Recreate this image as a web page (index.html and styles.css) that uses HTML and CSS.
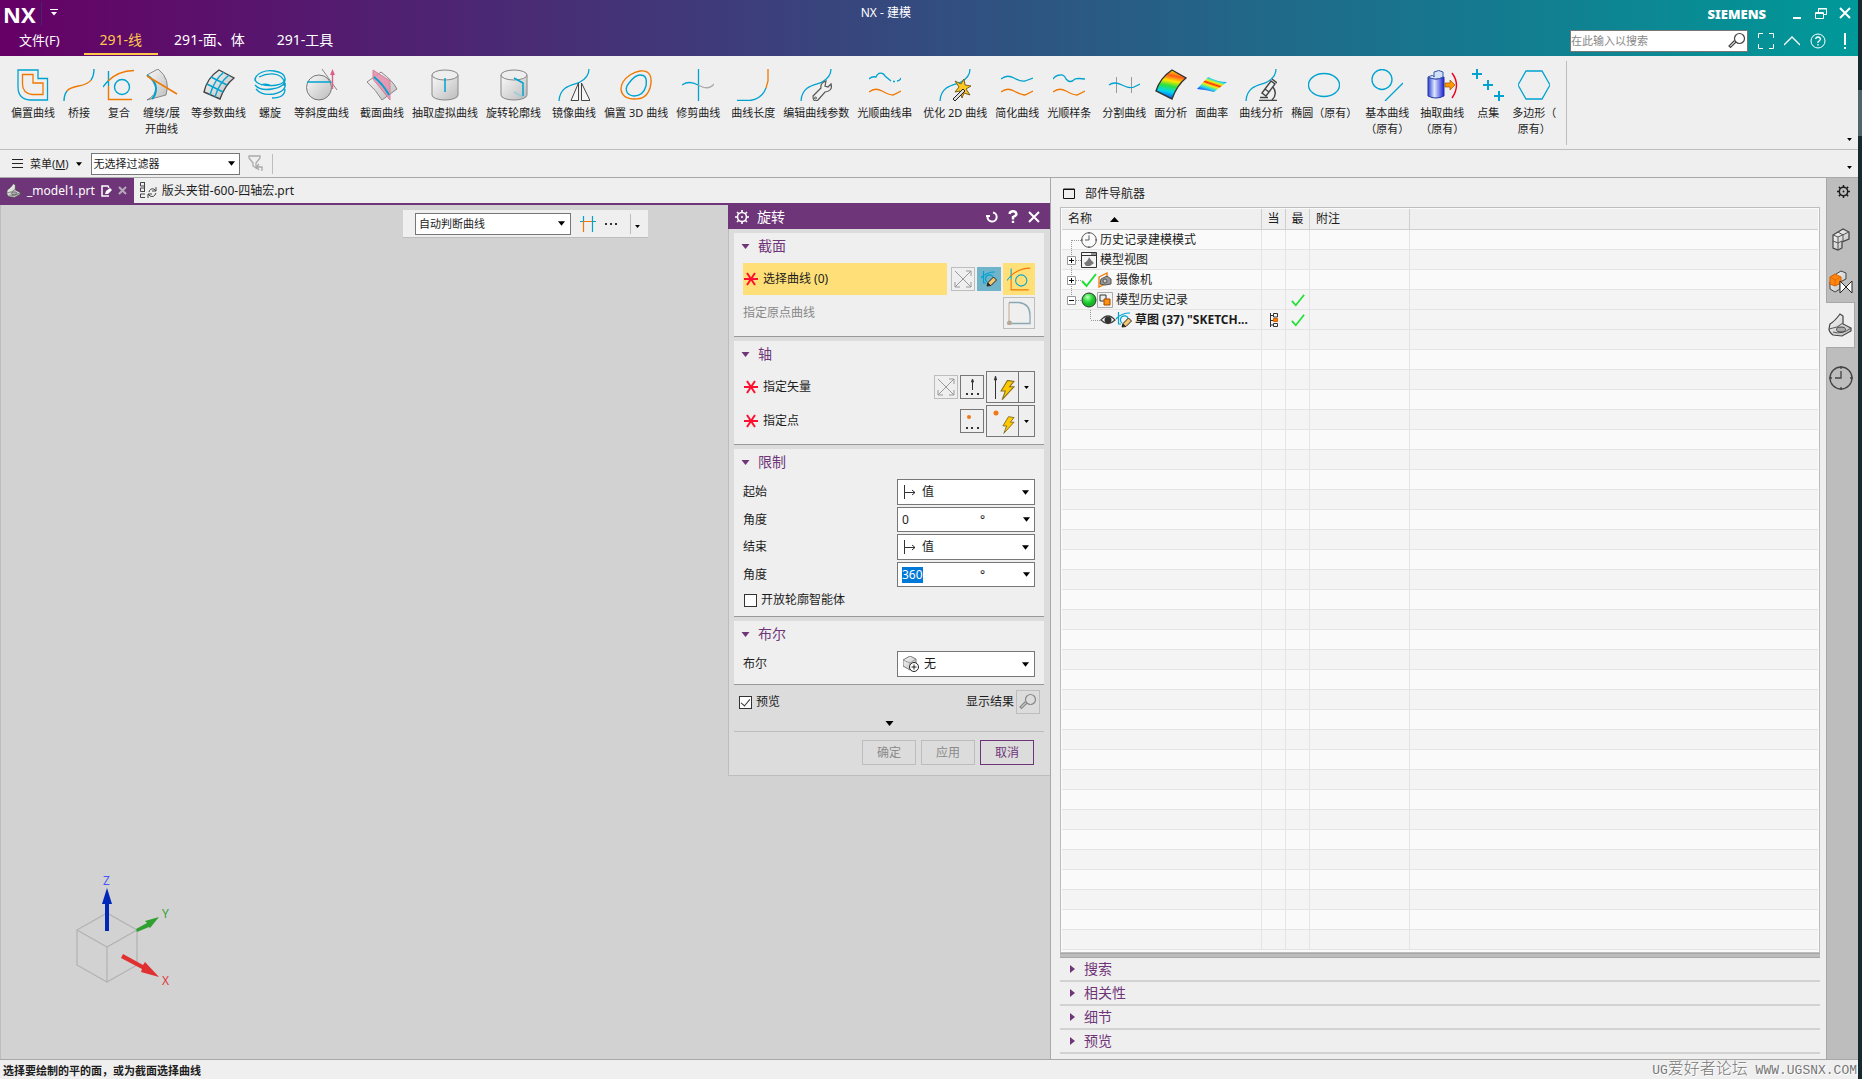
FILE: index.html
```html
<!DOCTYPE html>
<html lang="zh-CN">
<head>
<meta charset="utf-8">
<title>NX - 建模</title>
<link rel="stylesheet" href="styles.css">
</head>
<body>
<svg class="defs" aria-hidden="true">
  <defs>
    <linearGradient id="metal" x1="0" y1="0" x2="1" y2="1"><stop offset="0" stop-color="#fafafa"/><stop offset="1" stop-color="#bcbcbc"/></linearGradient>
    <linearGradient id="rainbow" x1="0.6" y1="0" x2="0.4" y2="1"><stop offset="0.05" stop-color="#ffc400"/><stop offset="0.2" stop-color="#ff5a1e"/><stop offset="0.38" stop-color="#ffe600"/><stop offset="0.55" stop-color="#2fe03c"/><stop offset="0.75" stop-color="#00d8f0"/><stop offset="1" stop-color="#1040f0"/></linearGradient>
    <linearGradient id="bands" gradientUnits="userSpaceOnUse" x1="18" y1="8" x2="13" y2="23"><stop offset="0" stop-color="#1d5cff"/><stop offset="0.18" stop-color="#27e0e0"/><stop offset="0.33" stop-color="#f5f000"/><stop offset="0.46" stop-color="#ff2a1a"/><stop offset="0.58" stop-color="#f5f000"/><stop offset="0.78" stop-color="#27e0e0"/><stop offset="1" stop-color="#1d5cff"/></linearGradient>
    <linearGradient id="bluecyl"><stop offset="0" stop-color="#2a3fd0"/><stop offset="0.4" stop-color="#dfe6ff"/><stop offset="1" stop-color="#1a1fd0"/></linearGradient>
    <radialGradient id="ball" cx="0.4" cy="0.3"><stop offset="0" stop-color="#c8ffc8"/><stop offset="0.6" stop-color="#30e040"/><stop offset="1" stop-color="#18b828"/></radialGradient>
    <symbol id="tri" viewBox="0 0 8 5"><path d="M0 0H8L4 5Z"/></symbol>
    <symbol id="star" viewBox="0 0 14 14"><path d="M0 7H14M3 1L11 13M11 1L3 13" fill="none" stroke="#ff1030" stroke-width="2"/></symbol>
    <symbol id="composite" viewBox="0 0 32 32"><g fill="none" stroke-width="1.4"><path d="M5.500 2V17M0 18Q3 14 5 12" stroke="#00a3d0"/><path d="M5 12Q15 2 31 1.500M5.500 17V30.500H29" stroke="#f07800"/><circle cx="19" cy="18" r="7.500" stroke="#00a3d0"/></g></symbol>
    <symbol id="pencilsketch" viewBox="0 0 16 16"><path d="M2.500 0V12H5M0 7Q5 1 14 1M6 11A4 4 0 1 1 12 6" fill="none" stroke="#00a3d0" stroke-width="1.200"/><path d="M6 15L7 11.500 12.500 6 15.500 9 10 14.500Z" fill="#f2c870" stroke="#222" stroke-width="1"/><path d="M6 15L7 11.500 9.500 14Z" fill="#222"/></symbol>
    <symbol id="cross" viewBox="0 0 24 24"><path d="M4 4L20 20M20 4L4 20M20 9V4H15M9 20H4V15M15 20H20V15" fill="none" stroke="#999"/></symbol>
    <symbol id="bolt" viewBox="0 0 14 18"><path d="M7 0L13 1 9 6H13L2 18 5 10H1Z" fill="#ffc800" stroke="#857020"/></symbol>
    <symbol id="mag" viewBox="0 0 18 18"><circle cx="11.500" cy="6.500" r="5" fill="none" stroke="currentColor" stroke-width="1.200"/><path d="M8 10L2.500 15.500 1 14 6.500 8.500" fill="none" stroke="currentColor" stroke-width="1.200"/></symbol>
    <symbol id="gear" viewBox="0 0 14 14"><circle cx="7" cy="7" r="4.500" fill="none" stroke="currentColor" stroke-width="1.600"/><circle cx="7" cy="7" r="1" fill="currentColor"/><path d="M7 0V2.500M7 11.500V14M0 7H2.500M11.500 7H14M2 2L4 4M10 10L12 12M12 2L10 4M4 10L2 12" stroke="currentColor" stroke-width="1.600"/></symbol>
    <symbol id="curve" viewBox="0 0 32 32"><path d="M1 32C2 15 18 16 22 13Q31 8 31 0" fill="none" stroke="#00a3d0" stroke-width="1.300"/></symbol>
    <symbol id="value" viewBox="0 0 14 14"><path d="M1.500 0V14M2 7.500H12M9 5L12 7.500 9 10" fill="none" stroke="#333"/></symbol>
    <symbol id="tick" viewBox="0 0 16 16"><path d="M1 9L5.500 14 15 2" fill="none" stroke="#20e030" stroke-width="2"/></symbol>
    <symbol id="part" viewBox="0 0 24 24"><path d="M1 16L2 11Q7 8 12 1L15 3V11L23 15V18L14 23 5 22Q1 19 1 16Z" fill="url(#metal)" stroke="#444" stroke-width="1.200"/><path d="M1 16Q10 15 15 10M5 19Q14 22 23 15" fill="none" stroke="#555"/><ellipse cx="13" cy="16.500" rx="4.500" ry="2.500" fill="#aaa" stroke="#444"/></symbol>
    <symbol id="clock" viewBox="0 0 24 24"><circle cx="12" cy="12" r="11" fill="none" stroke="#444" stroke-width="1.300"/><path d="M12 5V12H6M12 0V3M12 21V24M0 12H3M21 12H24" fill="none" stroke="#444" stroke-width="1.300"/></symbol>
  </defs>
</svg>
<div class="app">
  <header class="titlebar">
    <div class="title-row">
      <span class="logo">NX</span>
      <button class="qat" aria-label="快速访问"><svg width="8" height="7" fill="#fff"><path d="M0 0H8V1H0ZM1 3H7L4 6.500Z"/></svg></button>
      <h1 class="title">NX - 建模</h1>
      <span class="brand">SIEMENS</span>
      <div class="window-buttons">
        <button aria-label="最小化"><svg width="12" height="12"><path d="M2 11H10" stroke="#fff" stroke-width="2"/></svg></button>
        <button aria-label="还原"><svg width="12" height="12" fill="none" stroke="#fff"><path d="M3.500 5V1.500H11.500V7.500H8M3 2H12M.5 5.500H8.500V11.500H.5ZM1 6.500H8"/></svg></button>
        <button aria-label="关闭"><svg width="12" height="12"><path d="M1 1L11 11M11 1L1 11" stroke="#fff" stroke-width="2"/></svg></button>
      </div>
    </div>
    <div class="menu-row">
      <nav class="tabs">
        <a href="#file" class="file">文件(F)</a>
        <a href="#line" class="active">291-线</a>
        <a href="#face">291-面、体</a>
        <a href="#tool">291-工具</a>
      </nav>
      <div class="search"><input type="text" aria-label="搜索" placeholder="在此输入以搜索"><svg width="18" height="18"><use href="#mag"/></svg></div>
      <div class="help-buttons">
        <button aria-label="全屏"><svg width="16" height="16" fill="none" stroke="#fff"><path d="M.5 5V.5H5M11 .5H15.500V5M15.500 11V15.500H11M5 15.500H.5V11"/></svg></button>
        <button aria-label="折叠"><svg width="16" height="16" fill="none" stroke="#fff" stroke-width="1.300"><path d="M0 12L8 4 16 12"/></svg></button>
        <button aria-label="帮助"><svg width="16" height="16" fill="none" stroke="#fff"><circle cx="8" cy="8" r="7"/><path d="M5.500 6Q6 4 8 4T10.500 6Q10.500 7 8 9V10M8 11V12.500" stroke-width="1.300"/></svg></button>
        <button aria-label="提示" class="alert"><svg width="4" height="16"><path d="M2 0V12M2 14V16" stroke="#fff" stroke-width="2"/></svg></button>
      </div>
    </div>
  </header>

  <section class="ribbon">
    <div class="group">
      <button><svg class="ic" viewBox="0 0 32 32" fill="none" stroke-width="1.300"><path d="M1 1H21V9.500H30.500V31H13Q1 30 1 18Z" stroke="#00a3d0"/><path d="M5.500 5.500H16V14H26V25.500H15Q5.500 24 5.500 15Z" stroke="#f07800"/></svg>偏置曲线</button>
      <button><svg class="ic" viewBox="0 0 32 32" fill="none" stroke-width="1.400"><path d="M1 32Q1 26 4 22M28 11Q31 7 31 0" stroke="#00a3d0"/><path d="M4 22C9 15 23 19 28 11" stroke="#f07800"/></svg>桥接</button>
      <button><svg class="ic"><use href="#composite"/></svg>复合</button>
      <button><svg class="ic" viewBox="0 0 32 32"><path d="M1 6L12 0Q25 10 20 26L1 31Q10 26 10 19 8 12 1 6Z" fill="url(#metal)" stroke="#888"/><path d="M1 6Q10 12 10 19T6 30" fill="none" stroke="#00a3d0" stroke-width="2"/><path d="M1 7L31 25" stroke="#f07800" stroke-width="1.500"/></svg>缠绕/展<br>开曲线</button>
    </div>
    <div class="group">
      <button><svg class="ic" viewBox="0 0 32 32" fill="none"><path d="M16 1L31 9Q22 16 17 30L1 23Q4 9 16 1Z" fill="url(#metal)" stroke="#444" stroke-width="1.400"/><path d="M21 3Q11 11 7 26M26 6Q16 14 12 28M8 8L24 16M4 15L20 23" stroke="#00a3d0" stroke-width="1.400"/></svg>等参数曲线</button>
      <button><svg class="ic" viewBox="0 0 32 32" fill="none" stroke="#00a3d0" stroke-width="1.300"><path d="M1 12C1 3 13 1 20 2 34 4 34 14 23 16 12 18 0 15 1 9M1 16Q6 22 18 20 32 18 31 9M2 20Q8 27 20 25 33 22 31 14M31 20Q31 29 18 29M5 8Q15 3 24 6 32 10 30 17M7 16Q12 14 18 17"/></svg>螺旋</button>
      <button><svg class="ic" viewBox="0 0 32 32"><circle cx="13" cy="18.500" r="12.500" fill="url(#metal)" stroke="#777"/><path d="M16 0L31 21" stroke="#888"/><path d="M1 13H25" stroke="#00a3d0" stroke-width="1.500"/><path d="M26.500 20V5" stroke="#dc6088" stroke-width="1.400"/><path d="M24 6L26.500 0 29 6Z" fill="#dc6088"/></svg>等斜度曲线</button>
    </div>
    <div class="group">
      <button><svg class="ic" viewBox="0 0 32 32"><path d="M1 13L15 3Q27 12 31 20L16 31Q10 21 1 13Z" fill="url(#metal)" stroke="#888"/><path d="M7 1L24 12V31L7 10Z" fill="#e68aa8" fill-opacity=".8" stroke="#d8809c"/><path d="M8 8Q17 15 23 26" fill="none" stroke="#00a3d0" stroke-width="2"/></svg>截面曲线</button>
      <button><svg class="ic" viewBox="0 0 32 32"><path d="M3 6V26A13 5 0 0 0 29 26V6" fill="url(#metal)" stroke="#888"/><ellipse cx="16" cy="6" rx="13" ry="5" fill="#eee" stroke="#888"/><path d="M16 9V23" stroke="#00a3d0" stroke-width="1.500"/></svg>抽取虚拟曲线</button>
      <button><svg class="ic" viewBox="0 0 32 32"><path d="M3 6V26A13 5 0 0 0 29 26V6" fill="url(#metal)" stroke="#888"/><ellipse cx="16" cy="6" rx="13" ry="5" fill="#eee" stroke="#888"/><path d="M16 9L25 14V27" fill="none" stroke="#00a3d0" stroke-width="1.500"/><path d="M16 23L25 28" stroke="#9accda" stroke-width="1.500"/></svg>旋转轮廓线</button>
    </div>
    <div class="group">
      <button><svg class="ic" viewBox="0 0 32 32" fill="none"><use href="#curve"/><path d="M20.500 14V31.500H13ZM23.500 14V31.500H32Z" fill="#f6f6f6" stroke="#444"/></svg>镜像曲线</button>
      <button><svg class="ic" viewBox="0 0 32 32" fill="none"><path d="M20 2C30 1 33 8 30 19 27 28 22 30 14 30 3 30 -2 22 3 13 6 8 13 3 20 2Z" stroke="#f07800" stroke-width="1.400"/><path d="M20 6C26 6 27 10 26 17 24 24 20 27 14 27 6 26 4 20 9 14 12 10 16 6 20 6Z" stroke="#00a3d0" stroke-width="1.400"/></svg>偏置 3D 曲线</button>
      <button><svg class="ic" viewBox="0 0 32 32" fill="none" stroke-width="1.300"><path d="M16.500 0V32M0 16Q7 11 16 16" stroke="#00a3d0"/><path d="M16 16Q27 22 32 15" stroke="#aaa"/></svg>修剪曲线</button>
    </div>
    <div class="group">
      <button><svg class="ic" viewBox="0 0 32 32" fill="none" stroke-width="1.300"><path d="M0 31.500H13Q25 30 29 19" stroke="#00a3d0"/><path d="M31 0V12L29 19" stroke="#f07800"/></svg>曲线长度</button>
      <button><svg class="ic" viewBox="0 0 32 32" fill="none"><use href="#curve"/><path d="M13 27L21 19Q20 14 26 12L25 17 28 18 31 15Q33 22 25 23L18 31Q13 34 13 27Z" fill="#f0f0f0" stroke="#555" stroke-width="1.200"/><circle cx="15.500" cy="29" r="1" stroke="#555"/></svg>编辑曲线参数</button>
      <button><svg class="ic" viewBox="0 0 32 32" fill="none" stroke-width="1.300"><path d="M0 10Q3 7 7 8C9 3 14 3 16 7T22 12M24 12.500H26M28 12Q31 12 32 9" stroke="#00a3d0"/><path d="M0 23Q6 18 13 22T24 26L32 22" stroke="#f07800"/></svg>光顺曲线串</button>
    </div>
    <div class="group">
      <button><svg class="ic" viewBox="0 0 32 32"><use href="#curve"/><path d="M16 12L22 15 25 10 26 16 32 17 27 20 31 26 25 24 23 29 21 22 16 23 20 18Z" fill="#ffc820" stroke="#776018"/><path d="M14 30L24 20 26 22 16 32Z" fill="#ddd" stroke="#222"/></svg>优化 2D 曲线</button>
      <button><svg class="ic" viewBox="0 0 32 32" fill="none" stroke-width="1.300"><path d="M0 10Q6 5 13 9T24 12L32 9" stroke="#00a3d0"/><path d="M0 23Q6 18 13 22T24 26L32 22" stroke="#f07800"/></svg>简化曲线</button>
      <button><svg class="ic" viewBox="0 0 32 32" fill="none" stroke-width="1.300"><path d="M0 10Q3 6 7 6 11 5 13 10 17 15 22 10 25 9 32 10" stroke="#00a3d0"/><path d="M0 23Q6 18 13 22T24 26L32 22" stroke="#f07800"/></svg>光顺样条</button>
    </div>
    <div class="group">
      <button><svg class="ic" viewBox="0 0 32 32" fill="none"><path d="M8.500 8V24M23.500 8V24" stroke="#999"/><path d="M1 16Q6 12 14 16T26 18L32 15" stroke="#00a3d0" stroke-width="1.300"/></svg>分割曲线</button>
      <button class="tight"><svg class="ic" viewBox="0 0 32 32"><path d="M17 1L31 9Q22 16 17 30L1 22Q5 9 17 1Z" fill="url(#rainbow)" stroke="#333" stroke-width="1.400"/></svg>面分析</button>
      <button class="tight"><svg class="ic" viewBox="0 0 32 32"><path d="M12 8Q22 13 31 13L18 23Q11 21 1 20Z" fill="url(#bands)"/></svg>面曲率</button>
    </div>
    <div class="group">
      <button><svg class="ic" viewBox="0 0 32 32" fill="none"><use href="#curve"/><path d="M14 31.500H32M15 28.500H23M17 24L26 12 30 15 21 27ZM28 18Q33 25 27 31M20 20L24 23M27 10L32 14" stroke="#444" stroke-width="1.400"/></svg>曲线分析</button>
      <button><svg class="ic" viewBox="0 0 32 32" fill="none" stroke="#00a3d0" stroke-width="1.300"><ellipse cx="16" cy="16" rx="15.500" ry="11.500"/></svg>椭圆（原有）</button>
    </div>
    <div class="group flush">
      <button><svg class="ic" viewBox="0 0 32 32" fill="none" stroke="#00a3d0" stroke-width="1.300"><circle cx="11" cy="10.500" r="10"/><path d="M14 32L32 14"/></svg>基本曲线<br>（原有）</button>
    </div>
    <div class="group">
      <button><svg class="ic" viewBox="0 0 32 32"><path d="M2 8V27Q10 31 18 27V8Q10 12 2 8Z" fill="url(#bluecyl)" stroke="#2438a0"/><path d="M2 8Q8 5 8 8V3Q13 0 17 3V8Q10 12 2 8Z" fill="#cfe0f8" stroke="#3858a8"/><path d="M19 14H24V11L29 16 24 21V18H19Z" fill="#ff9800" stroke="#a05000" stroke-width=".7"/><path d="M26 4Q35 16 26 29" fill="none" stroke="#f00020" stroke-width="1.400"/></svg>抽取曲线<br>（原有）</button>
      <button><svg class="ic" viewBox="0 0 32 32" stroke="#00a3d0" stroke-width="2"><path d="M0 5H10M5 0V10M11 16H21M16 11V21M22 27H32M27 22V32"/></svg>点集</button>
      <button><svg class="ic" viewBox="0 0 32 32" fill="none" stroke="#00a3d0" stroke-width="1.300"><path d="M8 2H24L32 16 24 30H8L0 16Z"/></svg>多边形（<br>原有）</button>
    </div>
    <button class="more" aria-label="更多"><svg width="5" height="3"><use href="#tri"/></svg></button>
  </section>

  <div class="filterbar">
    <button class="menu-btn"><svg width="11" height="11" stroke="#222"><path d="M0 1.500H11M0 5.500H11M0 9.500H11"/></svg><span>菜单(<u>M</u>)</span><svg width="6" height="4"><use href="#tri"/></svg></button>
    <div class="combo filter"><select aria-label="选择过滤器"><option>无选择过滤器</option></select><svg class="arrow"><use href="#tri"/></svg></div>
    <svg width="17" height="17" fill="none" stroke="#aaa" stroke-width="1.300"><path d="M1 1H12V3L8 8V13L5 11V8L1 3ZM9 12H14V16M11 9L8.500 12 11 15"/></svg>
    <span class="vsep"></span>
    <button class="more" aria-label="更多"><svg width="5" height="3"><use href="#tri"/></svg></button>
  </div>

  <main class="main">
    <section class="workspace">
      <div class="doc-tabs">
        <button class="doc-tab current"><svg width="15" height="15"><use href="#part"/></svg><span>_model1.prt</span><svg width="11" height="12"><path d="M8 11H1V1H7L8 3" fill="none" stroke="#fff" stroke-width="1.500"/><path d="M4 9L5 6L9 3L11 5L7 9Z" fill="#fff"/></svg><svg width="9" height="9"><path d="M1 1L8 8M8 1L1 8" stroke="#b6aab9" stroke-width="2"/></svg></button>
        <button class="doc-tab"><svg width="17" height="17" fill="none" stroke="#444"><path d="M5 .5H.5V4H5M5 6H.5V9.500H5M5 12H.5V15.500H5M4.500 1V9M9 10Q10 6 14 7L16 9M16 5V9H12M16 11Q14 16 10 14L8 12M8 16V12H12"/></svg><span>版头夹钳-600-四轴宏.prt</span></button>
      </div>
      <div class="canvas">
        <div class="select-bar">
          <div class="combo rule"><select aria-label="曲线规则"><option>自动判断曲线</option></select><svg class="arrow"><use href="#tri"/></svg></div>
          <button aria-label="在相交处停止"><svg width="16" height="16" stroke-width="1.200" fill="none"><path d="M3.500 0V5M12.500 0V16M0 5.500H4M12 5.500H16" stroke="#00a3d0"/><path d="M3.500 5V16M4 5.500H12" stroke="#f07800"/></svg></button>
          <button aria-label="更多选项"><svg width="12" height="2"><path d="M0 0H2V2H0ZM5 0H7V2H5ZM10 0H12V2H10Z" fill="#333"/></svg></button>
          <span class="vsep"></span>
          <button aria-label="更多" class="low"><svg width="5" height="3"><use href="#tri"/></svg></button>
        </div>
        <svg class="triad" width="110" height="120" font-size="12">
          <g fill="none" stroke="#b2b2b2" stroke-width="1.200"><path d="M7 59L37 42 67 59 37 76ZM7 59V94L37 111 67 94V59M37 76V111"/></g>
          <path d="M35 60V33H32L37 17 42 33H39V60Z" fill="#0028b8"/>
          <path d="M66 58L77 52 75 50 89 46 80 57 79 56 67 61Z" fill="#30a030"/>
          <path d="M53 83L73 94 75 91 89 106 71 101 72 98 51 87Z" fill="#e03030"/>
          <text x="33" y="14" fill="#4858f8">Z</text><text x="92" y="47" fill="#38a038">Y</text><text x="92" y="114" fill="#e03838">X</text>
        </svg>
      </div>

      <form class="dialog">
        <header><svg width="14" height="14"><use href="#gear"/></svg><h2>旋转</h2>
          <button type="button" aria-label="重置"><svg width="12" height="12" fill="none" stroke="#fff" stroke-width="2"><path d="M7 1.500A4.600 4.600 0 1 1 1.500 6M0 5H4"/></svg></button>
          <button type="button" aria-label="帮助"><svg width="10" height="13" fill="none" stroke="#fff" stroke-width="2.400"><path d="M1.500 4Q2 1.300 5 1.300T8.500 4Q8.500 5.500 5 7V9.500M5 10.800V13"/></svg></button>
          <button type="button" aria-label="关闭"><svg width="12" height="12"><path d="M1 1L11 11M11 1L1 11" stroke="#fff" stroke-width="2"/></svg></button>
        </header>
        <section class="block">
          <h3><svg><use href="#tri"/></svg>截面</h3>
          <div class="row tall">
            <div class="pick"><svg width="14" height="14"><use href="#star"/></svg>选择曲线 (0)</div>
            <button type="button" class="tool off" aria-label="反向"><svg width="24" height="24"><use href="#cross"/></svg></button>
            <button type="button" class="tool blue" aria-label="绘制截面"><svg width="16" height="16"><use href="#pencilsketch"/></svg></button>
            <button type="button" class="tool big yellow" aria-label="曲线"><svg width="24" height="24"><use href="#composite"/></svg></button>
          </div>
          <div class="row tall"><span class="label muted">指定原点曲线</span>
            <button type="button" class="tool big off" aria-label="原点曲线"><svg width="24" height="24" fill="none"><path d="M2 22V1.500" stroke="#c8a890"/><path d="M2 1.500H12Q23 3 23 14V22.500H5" stroke="#88a8b4" stroke-width="1.300"/><circle cx="2.500" cy="22" r="2.500" fill="#b8a898"/></svg></button></div>
        </section>
        <section class="block">
          <h3><svg><use href="#tri"/></svg>轴</h3>
          <div class="row tall"><span class="label need"><svg width="14" height="14"><use href="#star"/></svg>指定矢量</span>
            <button type="button" class="tool off" aria-label="反向"><svg width="24" height="24"><use href="#cross"/></svg></button>
            <button type="button" class="tool" aria-label="矢量对话框"><svg width="16" height="18"><path d="M8.500 12V4M7.500 4L8.500 1 9.500 4Z" fill="#333" stroke="#333"/><path d="M2 16H4M7 16H9M13 16H15" stroke="#333" stroke-width="2"/></svg></button>
            <div class="split"><button type="button" aria-label="自动判断矢量"><svg width="24" height="26"><path d="M4.500 25V4M3.500 6L4.500 2 5.500 6Z" stroke="#333" fill="#333"/><use href="#bolt" x="9" y="6" width="15" height="20"/></svg></button><button type="button" aria-label="矢量类型"><svg width="5" height="3"><use href="#tri"/></svg></button></div>
          </div>
          <div class="row tall"><span class="label need"><svg width="14" height="14"><use href="#star"/></svg>指定点</span>
            <button type="button" class="tool" aria-label="点对话框"><svg width="16" height="18"><circle cx="5" cy="5" r="2" fill="#f07818"/><path d="M2 16H4M7 16H9M13 16H15" stroke="#333" stroke-width="2"/></svg></button>
            <div class="split"><button type="button" aria-label="自动判断点"><svg width="24" height="26"><circle cx="5" cy="5" r="2.500" fill="#f07818"/><use href="#bolt" x="11" y="8" width="13" height="18"/></svg></button><button type="button" aria-label="点类型"><svg width="5" height="3"><use href="#tri"/></svg></button></div>
          </div>
        </section>
        <section class="block">
          <h3><svg><use href="#tri"/></svg>限制</h3>
          <div class="row"><label class="label" for="start">起始</label><div class="combo"><svg width="14" height="14"><use href="#value"/></svg><select id="start"><option>值</option></select><svg class="arrow"><use href="#tri"/></svg></div></div>
          <div class="row"><label class="label" for="a1">角度</label><div class="combo angle"><input id="a1" type="text" value="0"><span>°</span><svg class="arrow"><use href="#tri"/></svg></div></div>
          <div class="row"><label class="label" for="end">结束</label><div class="combo"><svg width="14" height="14"><use href="#value"/></svg><select id="end"><option>值</option></select><svg class="arrow"><use href="#tri"/></svg></div></div>
          <div class="row"><label class="label" for="a2">角度</label><div class="combo angle"><input id="a2" type="text" value="360"><span>°</span><svg class="arrow"><use href="#tri"/></svg></div></div>
          <label class="check"><input type="checkbox">开放轮廓智能体</label>
        </section>
        <section class="block">
          <h3><svg><use href="#tri"/></svg>布尔</h3>
          <div class="row"><label class="label" for="bool">布尔</label><div class="combo"><svg width="16" height="16"><path d="M0 4L7 0 13 3V10L7 14 0 10Z" fill="url(#metal)" stroke="#777"/><path d="M0 4L7 7 13 3M7 7V14" fill="none" stroke="#999"/><circle cx="11" cy="11" r="4.500" fill="#fff" stroke="#222"/><path d="M11 8.500V13.500M8.500 11H13.500" stroke="#222"/></svg><select id="bool"><option>无</option></select><svg class="arrow"><use href="#tri"/></svg></div></div>
        </section>
        <div class="preview">
          <label class="check"><input type="checkbox" checked>预览</label>
          <span class="result">显示结果</span>
          <button type="button" class="tool off" aria-label="显示结果"><svg width="18" height="18"><use href="#mag"/></svg></button>
        </div>
        <button type="button" class="expand" aria-label="展开"><svg width="9" height="5"><use href="#tri"/></svg></button>
        <footer><button type="button" disabled>确定</button><button type="button" disabled>应用</button><button type="button" class="cancel">取消</button></footer>
      </form>
    </section>

    <aside class="navigator">
      <h2><svg width="12" height="12"><path d="M.5 1H11.500V10.500H.5ZM0 1.500H12" fill="none" stroke="#111"/></svg>部件导航器</h2>
      <div class="tree">
        <table>
          <colgroup><col class="c-name"><col class="c-mini"><col class="c-mini"><col class="c-note"><col></colgroup>
          <thead><tr><th>名称<svg width="9" height="5"><path d="M0 5L4.500 0 9 5Z"/></svg></th><th class="mid">当</th><th class="mid">最</th><th>附注</th><th></th></tr></thead>
          <tbody id="tree-body">
            <tr><td><div class="node"><svg width="19" height="20" class="dots"><path d="M9.500 10V20M10 10.500H19"/></svg><svg width="16" height="16"><use href="#clock"/></svg><span>历史记录建模模式</span></div></td><td></td><td></td><td></td><td></td></tr>
            <tr><td><div class="node"><svg width="19" height="20" class="dots"><path d="M9.500 0V20M10 10.500H19"/><path class="box" d="M5.500 6.500H13.500V14.500H5.500Z"/><path class="sign" d="M7 10.500H12M9.500 8V13"/></svg><svg width="16" height="16"><path d="M.5 .5H15.500V15.500H.5ZM0 3.500H16M10 2H15" fill="none" stroke="#333"/><path d="M3 11Q7 9 8 5L10 8 13 11 9 14H5Z" fill="#777"/></svg><span>模型视图</span></div></td><td></td><td></td><td></td><td></td></tr>
            <tr><td><div class="node"><svg width="19" height="20" class="dots"><path d="M9.500 0V20M10 10.500H19"/><path class="box" d="M5.500 6.500H13.500V14.500H5.500Z"/><path class="sign" d="M7 10.500H12M9.500 8V13"/></svg><svg width="16" height="16"><use href="#tick"/></svg><svg width="16" height="16"><path d="M2 5L10 1V11L2 15Z" fill="none" stroke="#f07800" stroke-width="1.300"/><path d="M4 7L10 4 14 7V12L8 13 3 12Z" fill="#999" stroke="#555"/><circle cx="8" cy="9" r="2" fill="#ccc" stroke="#555"/></svg><span>摄像机</span></div></td><td></td><td></td><td></td><td></td></tr>
            <tr><td><div class="node"><svg width="19" height="20" class="dots"><path d="M9.500 0V10M10 10.500H19"/><path class="box" d="M5.500 6.500H13.500V14.500H5.500Z"/><path class="sign" d="M7 10.500H12"/></svg><svg width="16" height="16"><circle cx="8" cy="8" r="7" fill="url(#ball)" stroke="#333"/></svg><svg width="16" height="16"><path d="M.5 .5H15.500V15.500H.5Z" fill="none" stroke="#aaa"/><path d="M3 3H9V9H3Z" fill="#eee" stroke="#333"/><path d="M7 7H13V13H7Z" fill="#ff9010" stroke="#a04800"/></svg><span>模型历史记录</span></div></td><td></td><td class="mid"><svg width="16" height="14" viewBox="0 0 16 16"><use href="#tick"/></svg></td><td></td><td></td></tr>
            <tr><td><div class="node strong"><svg width="38" height="20" class="dots"><path d="M28.500 0V10M29 10.500H38"/></svg><svg width="16" height="16"><path d="M1 8Q8 0 15 8 8 15 1 8Z" fill="#fff" stroke="#444" stroke-width="1.300"/><circle cx="8" cy="8" r="3.500" fill="#333"/></svg><svg width="16" height="16"><use href="#pencilsketch"/></svg><span>草图 (37) "SKETCH...</span></div></td><td class="mid"><svg width="10" height="14" fill="none" stroke="#333"><path d="M1.500 0V14M2 2.500H4M2 7.500H4M2 12H4M4.500 .5H8.500V4H4.500ZM4.500 10.500H8.500V13.500H4.500Z"/><path d="M4.500 5.500H8.500V8.500H4.500Z" fill="#ff8000" stroke="#e06000"/></svg></td><td class="mid"><svg width="16" height="14" viewBox="0 0 16 16"><use href="#tick"/></svg></td><td></td><td></td></tr>
          </tbody>
        </table>
      </div>
      <div class="splitter"></div>
      <button class="fold"><svg width="5" height="8"><path d="M0 0L5 4 0 8Z"/></svg>搜索</button>
      <button class="fold"><svg width="5" height="8"><path d="M0 0L5 4 0 8Z"/></svg>相关性</button>
      <button class="fold"><svg width="5" height="8"><path d="M0 0L5 4 0 8Z"/></svg>细节</button>
      <button class="fold"><svg width="5" height="8"><path d="M0 0L5 4 0 8Z"/></svg>预览</button>
    </aside>

    <nav class="resource-bar">
      <button aria-label="设置" class="first"><svg width="13" height="13"><use href="#gear"/></svg></button>
      <button aria-label="装配导航器"><svg width="18" height="24"><path d="M1 7L11 1 17 4V11L10 14V20L6 22 1 20Z" fill="url(#metal)" stroke="#444" stroke-width="1.200"/><path d="M1 7L6 9 17 4M6 9V22M1 13L6 15 10 13M6 4L11 7V13" fill="none" stroke="#555"/></svg></button>
      <button aria-label="约束导航器"><svg width="24" height="24"><path d="M7 4L12 1 17 3V9L11 12V19L6 22 1 19V12Z" fill="url(#metal)" stroke="#444"/><path d="M1 7L6 4 12 7V13L6 16 1 14Z" fill="#ff8410" stroke="#d06000"/><path d="M1 7L6 10 12 7M6 10V16" fill="none" stroke="#e07000"/><path d="M11 11V23L23 11V23Z" fill="#fff" stroke="#222"/></svg></button>
      <button aria-label="部件导航器" class="on"><svg width="24" height="24"><use href="#part"/></svg></button>
      <button aria-label="历史记录" class="last"><svg width="24" height="24"><use href="#clock"/></svg></button>
    </nav>
  </main>

  <footer class="status"><span>选择要绘制的平的面，或为截面选择曲线</span><span class="watermark">UG<b>爱好者论坛</b> WWW.UGSNX.COM</span></footer>
</div>
<div class="desktop"><span></span></div>
<script src="app.js"></script>
</body>
</html>
```
FILE: styles.css
```css
* { box-sizing: border-box; }
body {
  margin: 0;
  height: 100vh;
  display: flex;
  overflow: hidden;
  background: #efefef;
  color: #1c1c1c;
  font: 12px/16px "Noto Sans", "Noto Sans CJK SC", sans-serif;
}
h1, h2, h3 { margin: 0; font-weight: 400; }
button, input, select { font: inherit; color: inherit; margin: 0; padding: 0; border: 0; background: none; border-radius: 0; }
button { display: flex; align-items: center; justify-content: center; flex: none; white-space: nowrap; }
svg { display: block; flex: none; }
.defs { position: absolute; width: 0; height: 0; }
.app { flex: 1; min-width: 0; display: flex; flex-direction: column; }
.desktop { width: 4px; background: #15292e; padding-top: 90px; }
.desktop span { display: block; height: 46px; background: #50656a; }

/* title bar */
.titlebar { height: 56px; flex: none; color: #fff; background: linear-gradient(90deg, #660066, #009999); }
.title-row { height: 28px; display: flex; align-items: center; padding-right: 7px; }
.logo { width: 42px; height: 24px; padding-left: 3px; font: 700 22px/24px "Open Sans", sans-serif; border-right: 1px solid #3d2a66; }
.qat { width: 18px; margin-bottom: 4px; padding-left: 6px; }
.title { flex: 1; text-align: center; font-size: 12px; line-height: 26px; padding: 0 0 2px 4px; }
.brand { font: 900 13px/28px "Noto Sans", sans-serif; margin-right: 25px; }
.window-buttons { display: flex; gap: 12px; margin-bottom: 2px; }
.menu-row { height: 28px; display: flex; align-items: center; padding-right: 11px; }
.tabs { flex: 1; display: flex; padding-left: 3px; }
.tabs a { padding: 2px 16px 3px; height: 26px; color: #fff; text-decoration: none; font-size: 14px; line-height: 18px; }
.tabs .file { font-size: 13px; margin-right: 8px; }
.tabs .active { color: #ffc84a; border-bottom: 2px solid #ffc84a; }
.search { width: 178px; height: 22px; margin-top: -2px; display: flex; align-items: center; border: 1px solid #777; background: #fff; color: #444; padding-right: 1px; }
.search input { flex: 1; min-width: 0; font-size: 11px; outline: 0; }
.search input::placeholder { color: #888; opacity: 1; }
.help-buttons { display: flex; gap: 10px; margin: 0 0 2px 10px; }
.help-buttons .alert { margin-left: 7px; }

/* ribbon */
.ribbon { position: relative; height: 94px; flex: none; display: flex; align-items: flex-start; gap: 3px; padding: 5px 0 0 7px; border-bottom: 1px solid #bdbdbd; }
.group { display: flex; }
.group.flush { margin-left: -3px; }
.group:last-of-type { height: 84px; padding-right: 6px; border-right: 1px solid #bdbdbd; }
.group button { flex-direction: column; justify-content: flex-start; align-self: flex-start; min-width: 40px; padding: 8px 4px 0; font-size: 11px; text-align: center; }
.group .tight { min-width: 0; }
.ic { width: 32px; height: 32px; margin-bottom: 4px; }
.more { margin: 0 6px 8px auto; align-self: flex-end; }
.filterbar { height: 28px; flex: none; display: flex; align-items: center; padding-left: 12px; border-bottom: 1px solid #a8a8a8; font-size: 11px; }
.menu-btn { gap: 7px; margin-right: 9px; }
.combo { display: flex; align-items: center; gap: 5px; width: 138px; height: 26px; padding: 0 5px 0 5px; border: 1px solid #777; background: #fff; }
.combo select { flex: 1; min-width: 0; appearance: none; outline: 0; }
.arrow { width: 7px; height: 5px; pointer-events: none; }
.filter { width: 149px; height: 22px; padding: 0 4px 0 2px; margin-right: 8px; }
.vsep { width: 1px; height: 20px; background: #bdbdbd; }
.filterbar .vsep { margin-left: 7px; }

/* documents and canvas */
.main { flex: 1; min-height: 0; display: flex; }
.workspace { position: relative; flex: 1; min-width: 0; display: flex; flex-direction: column; }
.doc-tabs { height: 27px; flex: none; display: flex; border-bottom: 2px solid #6f3579; }
.doc-tab { gap: 5px; padding: 0 6px; }
.doc-tab.current { gap: 6px; padding-right: 7px; background: #6f3579; color: #fff; }
.canvas { position: relative; flex: 1; background: #d2d2d2; border-left: 1px solid #bdbdbd; padding-top: 5px; }
.select-bar { width: 245px; height: 28px; margin: 0 auto; display: flex; align-items: center; gap: 9px; padding: 0 6px 0 12px; background: #efefef; border-bottom: 1px solid #bdbdbd; }
.rule { width: 156px; height: 22px; padding-left: 3px; font-size: 11px; }
.select-bar .vsep { margin-left: 4px; }
.select-bar .low { margin: 6px 0 0 -5px; }
.triad { position: absolute; left: 69px; bottom: 68px; }

/* dialog */
.dialog { position: absolute; top: 25px; right: 0; width: 322px; padding: 0 6px 10px 5px; background: #dcdcdc; border: 1px solid #bdbdbd; border-top: 0; border-right: 0; }
.dialog > header { display: flex; align-items: center; height: 26px; margin: 0 -6px 4px; padding: 1px 10px 0 7px; background: #6f3579; color: #fff; }
.dialog h2 { flex: 1; padding-left: 8px; font-size: 14px; line-height: 24px; }
.dialog header button { margin-left: 10px; }
.block { background: #efefef; border-bottom: 1px solid #999; margin-bottom: 4px; padding: 0 9px 7px; display: flex; flex-direction: column; gap: 2px; }
.block h3 { display: flex; align-items: center; gap: 8px; height: 26px; margin: 0 -2px 2px; color: #6f3579; font-size: 14px; }
.block h3 svg { width: 9px; height: 5px; fill: #6f3579; }
.row { display: flex; align-items: center; gap: 2px; }
.tall { height: 32px; }
.label { flex: 1; display: flex; align-items: center; }
.need, .pick { gap: 5px; padding-left: 1px; }
.muted { color: #888; }
.pick { flex: 1; height: 32px; margin-right: 2px; display: flex; align-items: center; background: #ffe078; }
.tool { width: 24px; height: 24px; border: 1px solid #777; }
.tool.off { border-color: #bdbdbd; color: #888; }
.tool.blue { background: #70b4cc; border: 0; }
.tool.big { width: 32px; height: 32px; }
.tool.yellow { background: #ffe078; border: 0; }
.split { display: flex; width: 49px; height: 32px; border: 1px solid #777; }
.split button { width: 31px; }
.split button + button { flex: 1; border-left: 1px solid #777; }
.angle { height: 25px; padding: 0 4px; }
.angle input { width: 60px; outline: 0; }
.angle span { flex: 1; padding-left: 13px; }
.angle input::selection { background: #0078d7; color: #fff; }
.check { display: flex; align-items: center; gap: 4px; height: 18px; margin: 2px 0 0 1px; }
.check input { position: relative; appearance: none; width: 13px; height: 13px; border: 1px solid #333; background: #fff; }
.check input:checked::after { content: ""; position: absolute; left: 3px; top: 0; width: 4px; height: 8px; border: solid #333; border-width: 0 1px 1px 0; transform: rotate(40deg); }
.preview { display: flex; align-items: center; height: 26px; padding: 0 4px; margin-top: 4px; }
.preview .check { margin-top: 0; }
.result { margin-left: auto; padding-right: 2px; }
.expand { width: 100%; height: 17px; border-bottom: 1px solid #bdbdbd; margin-bottom: 8px; }
.dialog footer { display: flex; justify-content: flex-end; gap: 5px; padding-right: 10px; }
.dialog footer button { width: 54px; height: 25px; border: 1px solid #bdbdbd; color: #8a8a8a; }
.dialog footer .cancel { border-color: #6f3579; color: #6f3579; }

/* navigator */
.navigator { width: 776px; flex: none; display: flex; flex-direction: column; border-left: 1px solid #a8a8a8; padding: 0 6px 5px 9px; }
.navigator h2 { display: flex; align-items: center; gap: 10px; height: 29px; flex: none; padding: 2px 0 0 3px; font-size: 12px; }
.tree { flex: 1; min-height: 0; overflow: hidden; border: 1px solid #bdbdbd; padding: 1px; background: #fafafa; }
table { width: 100%; table-layout: fixed; border-collapse: separate; border-spacing: 0; }
.c-name { width: 200px; }
.c-mini { width: 24px; }
.c-note { width: 100px; }
th { height: 21px; padding: 0 6px; background: #efefef; border: solid #cfcfcf; border-width: 0 1px 1px 0; font-weight: 400; text-align: left; }
th svg { display: inline-block; margin: 0 0 1px 18px; }
td { height: 20px; padding: 0; border: solid #e4e4e4; border-width: 0 1px 1px 0; }
th:last-child, td:last-child { border-right: 0; }
.mid { padding: 0; text-align: center; }
.mid svg { margin: 0 auto; }
tbody tr:nth-child(even), tbody tr:nth-child(5) { background: #f4f4f4; }
.node { display: flex; align-items: center; height: 19px; overflow: hidden; white-space: nowrap; }
.node span { padding-left: 3px; }
.strong { font-weight: 700; }
.dots { fill: none; stroke: #999; stroke-dasharray: 1 1; }
.dots .box { fill: #fff; stroke: #999; stroke-dasharray: none; }
.dots .sign { stroke: #111; stroke-dasharray: none; }
.splitter { height: 5px; flex: none; background: #bdbdbd; border: solid #a8a8a8; border-width: 1px 0; }
.fold { height: 24px; justify-content: flex-start; gap: 9px; padding-left: 10px; border-bottom: 2px solid #d2d2d2; color: #6f3579; font-size: 14px; }
.fold svg { fill: #6f3579; }
.resource-bar { width: 32px; flex: none; display: flex; flex-direction: column; background: #bdbdbd; border-left: 1px solid #a8a8a8; }
.resource-bar button { width: 27px; height: 42px; }
.resource-bar .first { width: 32px; height: 27px; margin-bottom: 14px; }
.resource-bar .on { width: 29px; height: 46px; background: #efefef; border: 1px solid #a8a8a8; border-left: 0; margin: -1px 0 0 -1px; }
.resource-bar .last { height: 60px; }

.status { height: 21px; flex: none; display: flex; justify-content: space-between; align-items: center; padding: 2px 1px 0 3px; margin-bottom: -1px; border-top: 1px solid #a8a8a8; font-size: 11px; font-weight: 700; }
.watermark { color: #777; font: 13px/16px "Liberation Mono", monospace; margin-bottom: 4px; text-shadow: 1px 1px #fff; white-space: pre; }
.watermark b { font: 300 16px/16px "Noto Sans CJK SC", sans-serif; }
```
FILE: app.js
```js
const body = document.getElementById('tree-body');
for (let i = 0; i < 31; i++) {
  const row = body.insertRow();
  for (let c = 0; c < 5; c++) row.insertCell();
}
const angle = document.getElementById('a2');
angle.focus();
angle.select();
```
